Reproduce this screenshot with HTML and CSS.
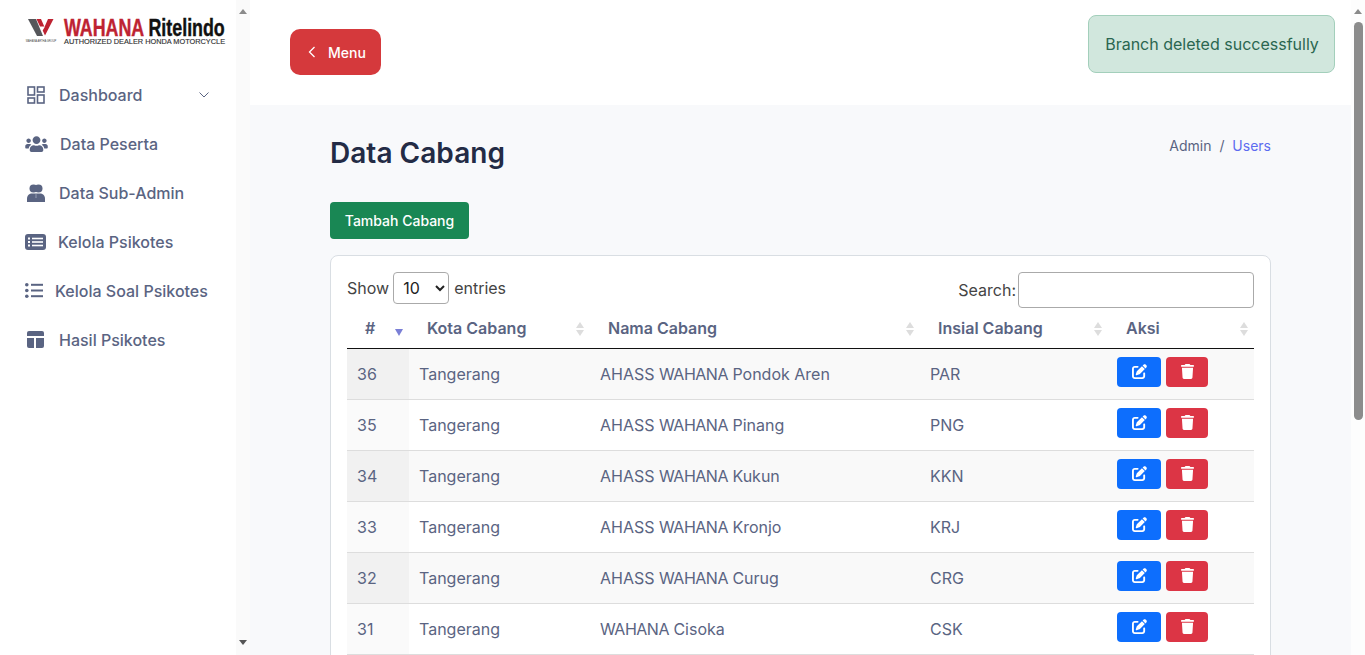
FILE: index.html
```html
<!DOCTYPE html>
<html>

<head>
  <title>Data Cabang</title>
  <link rel="stylesheet" href="styles.css">
</head>

<body>
  <aside class="sidebar">
    <div class="logo">
      <div class="logo-mark">
        <svg width="26" height="17" viewBox="0 0 26 17">
          <path d="M0 0H8L15 17H9Z" fill="#55565a" />
          <path d="M8.500 0H13L16.500 8L20 0H25.500L17 16.500L14.700 11.500L17 7.500H12Z" fill="#be2332" />
        </svg>
        <span class="logo-tiny">WAHANA ARTHA GROUP</span>
      </div>
      <div class="logo-text">
        <div class="logo-name"><span class="logo-red">WAHANA</span> Ritelindo</div>
        <div class="logo-sub">AUTHORIZED DEALER HONDA MOTORCYCLE</div>
      </div>
    </div>
    <nav class="menu">
      <a class="menu-item menu-dash">
        <svg class="menu-icon" width="18" height="18" viewBox="0 0 18 18" fill="none" stroke="#5a6482" stroke-width="1.6">
          <rect x="1" y="1" width="6.500" height="8" />
          <rect x="10.500" y="1" width="6.500" height="5" />
          <rect x="1" y="12" width="6.500" height="5" />
          <rect x="10.500" y="9" width="6.500" height="8" />
        </svg>
        <span>Dashboard</span>
        <svg class="chevron" width="10" height="6" viewBox="0 0 10 6" fill="none" stroke="#5a6482" stroke-width="1">
          <path d="M0.500 0.500L5 5L9.500 0.500" />
        </svg>
      </a>
      <a class="menu-item menu-peserta">
        <svg class="menu-icon icon-users" width="23" height="18" viewBox="0 0 640 512" fill="#5a6482">
          <path d="M96 224c35.300 0 64-28.700 64-64s-28.700-64-64-64-64 28.700-64 64 28.700 64 64 64zm448 0c35.300 0 64-28.700 64-64s-28.700-64-64-64-64 28.700-64 64 28.700 64 64 64zm32 32h-64c-17.600 0-33.500 7.100-45.100 18.600 40.300 22.100 68.900 62 75.100 109.400h66c17.700 0 32-14.300 32-32v-32c0-35.300-28.700-64-64-64zm-256 0c61.900 0 112-50.100 112-112S381.900 32 320 32 208 82.100 208 144s50.100 112 112 112zm76.800 32h-8.300c-20.800 10-43.900 16-68.500 16s-47.600-6-68.500-16h-8.300C179.600 288 128 339.600 128 403.200V432c0 26.500 21.500 48 48 48h288c26.500 0 48-21.500 48-48v-28.800c0-63.600-51.600-115.200-115.200-115.200zm-223.700-13.400C161.500 263.100 145.600 256 128 256H64c-35.300 0-64 28.700-64 64v32c0 17.700 14.300 32 32 32h65.900c6.300-47.400 34.900-87.300 75.200-109.400z" />
        </svg>
        <span>Data Peserta</span>
      </a>
      <a class="menu-item">
        <svg class="menu-icon" width="18" height="18" viewBox="0 0 18 18" fill="#5a6482">
          <circle cx="6.500" cy="4.500" r="4" />
          <circle cx="11.500" cy="4.500" r="4" />
          <path d="M0 15C0 11 2.500 9.500 5 9.500H13C15.500 9.500 18 11 18 15V18H0Z" />
          <path d="M8.500 10H9.500L9.700 14H8.300Z" fill="#8a92aa" />
        </svg>
        <span>Data Sub-Admin</span>
      </a>
      <a class="menu-item menu-psikotes">
        <svg class="menu-icon" width="21" height="16" viewBox="0 0 21 16">
          <rect width="21" height="16" rx="3" fill="#5a6482" />
          <g fill="#fff">
            <rect x="3" y="3.500" width="2" height="2" />
            <rect x="3" y="7" width="2" height="2" />
            <rect x="3" y="10.500" width="2" height="2" />
            <rect x="7" y="3.700" width="11" height="1.600" />
            <rect x="7" y="7.200" width="11" height="1.600" />
            <rect x="7" y="10.700" width="11" height="1.600" />
          </g>
        </svg>
        <span>Kelola Psikotes</span>
      </a>
      <a class="menu-item menu-soal">
        <svg class="menu-icon" width="18" height="15" viewBox="0 0 18 15" fill="#5a6482">
          <circle cx="1.800" cy="1.800" r="1.800" />
          <circle cx="1.800" cy="7.500" r="1.800" />
          <circle cx="1.800" cy="13.200" r="1.800" />
          <rect x="6" y="0.800" width="12" height="2" />
          <rect x="6" y="6.500" width="12" height="2" />
          <rect x="6" y="12.200" width="12" height="2" />
        </svg>
        <span>Kelola Soal Psikotes</span>
      </a>
      <a class="menu-item menu-hasil">
        <svg class="menu-icon" width="17" height="17" viewBox="0 0 17 17" fill="#5a6482">
          <path d="M2 0H15A2 2 0 0 1 17 2V5H0V2A2 2 0 0 1 2 0Z" />
          <path d="M0 7H7V17H2A2 2 0 0 1 0 15Z" />
          <path d="M9 7H17V15A2 2 0 0 1 15 17H9Z" />
        </svg>
        <span>Hasil Psikotes</span>
      </a>
    </nav>
  </aside>
  <div class="side-scroll">
    <span class="arrow-up"></span>
    <span class="arrow-down"></span>
  </div>

  <main class="main">
    <header class="topbar">
      <button class="menu-btn" type="button">
        <svg width="8" height="12" viewBox="0 0 8 12" fill="none" stroke="#fff" stroke-width="1.300">
          <path d="M6.500 1L1.500 6L6.500 11" />
        </svg>
        Menu
      </button>
      <div class="alert">Branch deleted successfully</div>
    </header>

    <section class="content">
      <div class="page-head">
        <h1>Data Cabang</h1>
        <div class="crumbs">Admin <span class="crumb-sep">/</span> <a>Users</a></div>
      </div>
      <button class="add-btn" type="button">Tambah Cabang</button>

      <div class="card">
        <div class="table-tools">
          <label class="length">Show
            <select>
              <option>10</option>
            </select>
            entries</label>
          <label class="search">Search: <input type="text"></label>
        </div>
        <table>
          <colgroup>
            <col class="col-id">
            <col class="col-kota">
            <col class="col-nama">
            <col class="col-inisial">
            <col class="col-aksi">
          </colgroup>
          <thead>
            <tr>
              <th class="sorted">#</th>
              <th>Kota Cabang</th>
              <th>Nama Cabang</th>
              <th>Insial Cabang</th>
              <th>Aksi</th>
            </tr>
          </thead>
          <tbody id="rows"></tbody>
        </table>
      </div>
    </section>
  </main>
  <div class="page-scroll">
    <span class="arrow-up"></span>
    <span class="thumb"></span>
  </div>

  <script>
    const branches = [
      [36, "AHASS WAHANA Pondok Aren", "PAR"],
      [35, "AHASS WAHANA Pinang", "PNG"],
      [34, "AHASS WAHANA Kukun", "KKN"],
      [33, "AHASS WAHANA Kronjo", "KRJ"],
      [32, "AHASS WAHANA Curug", "CRG"],
      [31, "WAHANA Cisoka", "CSK"],
    ];

    const editIcon = '<svg width="15" height="15" viewBox="0 0 512 512" fill="#fff"><path d="M471.600 21.700c-21.900-21.900-57.300-21.900-79.200 0L362.300 51.700l97.900 97.900 30.100-30.100c21.900-21.900 21.900-57.300 0-79.200L471.600 21.700zm-299.200 220c-6.100 6.100-10.800 13.600-13.500 21.900l-29.600 88.800c-2.900 8.600-.6 18.100 5.800 24.600s15.900 8.700 24.600 5.800l88.800-29.600c8.200-2.700 15.700-7.400 21.900-13.500L437.700 172.300 339.700 74.300 172.400 241.700zM96 64C43 64 0 107 0 160V416c0 53 43 96 96 96H352c53 0 96-43 96-96V320c0-17.700-14.300-32-32-32s-32 14.300-32 32v96c0 17.700-14.300 32-32 32H96c-17.700 0-32-14.300-32-32V160c0-17.700 14.300-32 32-32h96c17.700 0 32-14.300 32-32s-14.300-32-32-32H96z"/></svg>';
    const trashIcon = '<svg width="13" height="15" viewBox="0 0 448 512" fill="#fff"><path d="M135.200 17.700L128 32H32C14.300 32 0 46.300 0 64S14.300 96 32 96H416c17.700 0 32-14.300 32-32s-14.300-32-32-32H320l-7.200-14.300C307.400 6.800 296.300 0 284.200 0H163.800c-12.100 0-23.200 6.800-28.600 17.700zM416 128H32L53.200 467c1.600 25.300 22.600 45 47.900 45H346.900c25.300 0 46.300-19.700 47.900-45L416 128z"/></svg>';

    // Fill the table body
    document.getElementById("rows").innerHTML = branches.map(function (b) {
      const name = b[1].replace("WAHANA", "<span class=\"tight\">WAHANA</span>");
      return "<tr><td class=\"sorted\">" + b[0] + "</td><td>Tangerang</td><td>" + name + "</td><td>" + b[2] + "</td>" +
        "<td><div class=\"actions\"><button class=\"btn-edit\" type=\"button\">" + editIcon + "</button>" +
        "<button class=\"btn-del\" type=\"button\">" + trashIcon + "</button></div></td></tr>";
    }).join("");
  </script>
</body>

</html>
```

FILE: styles.css
```css
* {
  box-sizing: border-box;
}

html,
body {
  height: 655px;
  margin: 0;
  overflow: hidden;
}

body {
  display: flex;
  font-family: Inter, "Noto Sans", sans-serif;
  font-size: 16px;
  color: #5a6482;
  background: #fff;
}

/* Sidebar */
.sidebar {
  width: 236px;
  flex-shrink: 0;
  background: #fff;
}

.logo {
  display: flex;
  height: 87px;
  padding: 18px 0 0 25px;
  gap: 7px;
}

.logo-mark {
  width: 32px;
  display: flex;
  flex-direction: column;
  align-items: center;
  padding-top: 1px;
}

.logo-tiny {
  font-family: "Liberation Sans", sans-serif;
  font-size: 2.600px;
  line-height: 4px;
  margin-top: 4px;
  color: #444;
  white-space: nowrap;
}

.logo-text {
  width: 161px;
}

.logo-name {
  font-family: "Liberation Sans", sans-serif;
  font-weight: 700;
  font-size: 23px;
  line-height: 19px;
  margin-top: 1px;
  color: #111;
  white-space: nowrap;
  -webkit-text-stroke: 0.4px;
  transform: scaleX(0.775);
  transform-origin: left;
}

.logo-red {
  color: #be2332;
}

.logo-sub {
  font-family: "Liberation Sans", sans-serif;
  font-size: 7.350px;
  line-height: 7px;
  color: #333;
  white-space: nowrap;
  -webkit-text-stroke: 0.15px;
}

.menu {
  display: flex;
  flex-direction: column;
}

.menu-item {
  display: flex;
  align-items: center;
  height: 49px;
  padding-left: 27px;
  gap: 14px;
  color: #5a6482;
  font-weight: 500;
}

.menu-dash {
  height: 18px;
  margin: 0 0 14px;
  padding-left: 27px;
  position: relative;
  top: -1px;
}

.menu-item .icon-users {
  margin-left: -2px;
  margin-right: -1px;
}

.menu-peserta {
  gap: 13px;
}

.menu-psikotes {
  padding-left: 25px;
  gap: 12px;
}

.menu-soal {
  padding-left: 25px;
  gap: 12px;
}

.menu-hasil {
  gap: 15px;
}

.chevron {
  margin-left: auto;
  margin-right: 27px;
}

/* Fake scrollbars, the browser hides the real ones */
.side-scroll,
.page-scroll {
  width: 14px;
  flex-shrink: 0;
  position: relative;
  background: #fafafa;
}

.page-scroll {
  background: #fdfdfd;
}

.arrow-up,
.arrow-down {
  position: absolute;
  left: 3px;
  width: 0;
  height: 0;
  border-left: 4px solid transparent;
  border-right: 4px solid transparent;
}

.arrow-up {
  top: 9px;
  border-bottom: 5px solid #8a8a8a;
}

.arrow-down {
  bottom: 10px;
  border-top: 5px solid #555;
}

.thumb {
  position: absolute;
  top: 22px;
  left: 3px;
  width: 9px;
  height: 398px;
  border-radius: 5px;
  background: #8c8c8c;
}

/* Main area */
.main {
  flex: 1;
  min-width: 0;
  overflow: hidden;
  background: #f8f9fb;
}

.topbar {
  display: flex;
  justify-content: space-between;
  align-items: flex-start;
  height: 105px;
  padding: 15px 16px 0 40px;
  background: #fff;
}

.menu-btn {
  display: flex;
  align-items: center;
  gap: 12px;
  height: 46px;
  width: 91px;
  margin-top: 14px;
  padding: 0 0 0 18px;
  border: none;
  border-radius: 10px;
  background: #d5393c;
  color: #fff;
  font-family: inherit;
  font-size: 14px;
  font-weight: 500;
}

.alert {
  width: 247px;
  height: 58px;
  padding-left: 1px;
  line-height: 56px;
  text-align: center;
  border: 1px solid #a3cfbb;
  border-radius: 8px;
  background: #d1e7dd;
  color: #2a6650;
}

.content {
  padding: 0 80px;
}

.page-head {
  display: flex;
  justify-content: space-between;
  padding-top: 30px;
  height: 97px;
}

h1 {
  margin: 0;
  font-size: 28px;
  font-weight: 600;
  line-height: 36px;
  letter-spacing: 0.03px;
  color: #232b45;
}

.crumbs {
  font-size: 14px;
  line-height: 22px;
}

.crumb-sep {
  margin: 0 4px;
}

.crumbs a {
  color: #5c6cf0;
}

.add-btn {
  display: block;
  width: 139px;
  height: 37px;
  padding: 0;
  border: none;
  border-radius: 4px;
  background: #198754;
  color: #fff;
  font-family: inherit;
  font-size: 14px;
  font-weight: 500;
}

.card {
  margin-top: 16px;
  padding: 16px;
  height: 500px;
  background: #fff;
  border: 1px solid #d9dee3;
  border-radius: 8px;
}

.table-tools {
  display: flex;
  justify-content: space-between;
  height: 36px;
  color: #444;
}

.length {
  display: flex;
  align-items: center;
  gap: 5px;
  height: 32px;
}

.length select {
  width: 56px;
  height: 32px;
  margin-left: -1px;
  padding: 0 0 0 5px;
  font-family: inherit;
  font-size: 16px;
  color: #222;
  background: #fff;
  border: 1px solid #aaa;
  border-radius: 4px;
}

.search {
  display: flex;
  align-items: center;
  gap: 2px;
}

.search input {
  width: 236px;
  height: 36px;
  border: 1px solid #aaa;
  border-radius: 4px;
}

table {
  width: 907px;
  table-layout: fixed;
  border-collapse: collapse;
}

.col-id {
  width: 62px;
}

.col-kota {
  width: 181px;
}

.col-nama {
  width: 330px;
}

.col-inisial {
  width: 188px;
}

.col-aksi {
  width: 146px;
}

th {
  position: relative;
  height: 40px;
  padding: 0 0 0 18px;
  text-align: left;
  font-weight: 600;
  border-bottom: 1px solid #111;
  white-space: nowrap;
}

/* Sort arrows */
th::before,
th::after {
  content: "";
  position: absolute;
  right: 6px;
  width: 0;
  height: 0;
  border-left: 4px solid transparent;
  border-right: 4px solid transparent;
}

th::before {
  top: 14px;
  border-bottom: 6px solid #ddd;
}

th::after {
  top: 22px;
  border-top: 6px solid #ddd;
}

th.sorted::before {
  border-bottom-color: transparent;
}

th.sorted::after {
  top: 21px;
  border-top: 7px solid #7a7fd6;
}

td {
  height: 51px;
  padding: 0 10px;
  border-bottom: 1px solid #ddd;
  white-space: nowrap;
}

.tight {
  letter-spacing: -0.5px;
}

tbody tr:nth-child(odd) td {
  background: #f9f9f9;
}

tbody tr:nth-child(odd) td.sorted {
  background: #f1f1f1;
}

tbody td.sorted {
  background: #fafafa;
}

.actions {
  display: flex;
  gap: 5px;
  margin: 0 0 4px -1px;
}

.actions button {
  display: flex;
  align-items: center;
  justify-content: center;
  height: 30px;
  padding: 0;
  border: none;
  border-radius: 4px;
}

.btn-edit {
  width: 44px;
  background: #0d6efd;
}

.btn-del {
  width: 42px;
  background: #dc3545;
}
```
